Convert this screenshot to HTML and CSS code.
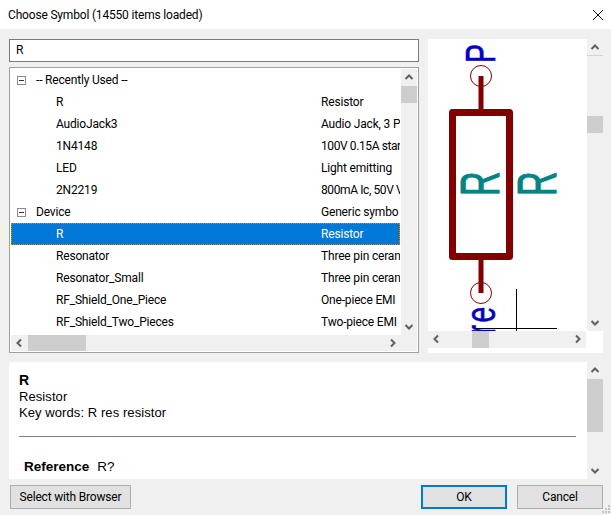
FILE: index.html
```html
<!DOCTYPE html>
<html lang="en">
<head>
  <meta charset="UTF-8" />
  <title>Choose Symbol</title>
  <link rel="stylesheet" href="styles.css">
</head>
<body>

<svg class="sprite" width="0" height="0">
  <symbol id="chev-up" viewBox="0 0 16 16"><polyline points="4.5,10 8,6.5 11.5,10" /></symbol>
  <symbol id="chev-down" viewBox="0 0 16 16"><polyline points="4.5,6 8,9.5 11.5,6" /></symbol>
  <symbol id="chev-left" viewBox="0 0 16 16"><polyline points="10,4.5 6.5,8 10,11.5" /></symbol>
  <symbol id="chev-right" viewBox="0 0 16 16"><polyline points="6,4.5 9.5,8 6,11.5" /></symbol>
</svg>

<div class="dialog">

  <div class="titlebar">
    <span class="title">Choose Symbol (14550 items loaded)</span>
    <svg class="close" width="10" height="10" viewBox="0 0 10 10"><path d="M0 0L10 10M10 0L0 10" /></svg>
  </div>

  <div class="top">
    <div class="left">
      <div class="search">R</div>

      <div class="tree">
        <div class="tree-body">
          <div class="rows">
            <div class="row group"><span class="name"><i class="expander"></i>-- Recently Used --</span><span class="desc"></span></div>
            <div class="row"><span class="name">R</span><span class="desc">Resistor</span></div>
            <div class="row"><span class="name">AudioJack3</span><span class="desc">Audio Jack, 3 P</span></div>
            <div class="row"><span class="name">1N4148</span><span class="desc tight">100V 0.15A star</span></div>
            <div class="row"><span class="name">LED</span><span class="desc">Light emitting</span></div>
            <div class="row"><span class="name">2N2219</span><span class="desc tight">800mA Ic, 50V V</span></div>
            <div class="row group"><span class="name"><i class="expander"></i>Device</span><span class="desc">Generic symbo</span></div>
            <div class="row selected"><span class="name">R</span><span class="desc">Resistor</span></div>
            <div class="row"><span class="name">Resonator</span><span class="desc">Three pin ceran</span></div>
            <div class="row"><span class="name">Resonator_Small</span><span class="desc">Three pin ceran</span></div>
            <div class="row"><span class="name">RF_Shield_One_Piece</span><span class="desc">One-piece EMI</span></div>
            <div class="row"><span class="name">RF_Shield_Two_Pieces</span><span class="desc">Two-piece EMI</span></div>
          </div>
          <div class="vbar">
            <svg class="arrow"><use href="#chev-up" /></svg>
            <div class="thumb tree-thumb"></div>
            <svg class="arrow end"><use href="#chev-down" /></svg>
          </div>
        </div>
        <div class="hbar-row">
          <div class="hbar tree-hbar">
            <svg class="arrow"><use href="#chev-left" /></svg>
            <div class="thumb tree-hthumb"></div>
            <svg class="arrow end"><use href="#chev-right" /></svg>
          </div>
          <div class="corner"></div>
        </div>
      </div>
    </div>

    <div class="preview">
      <div class="preview-top">
        <svg class="canvas" width="159" height="292" viewBox="428 39 159 292">
          <g class="part">
            <line x1="481" y1="76" x2="481" y2="110" />
            <line x1="481" y1="260" x2="481" y2="293" />
            <rect x="452.500" y="112.500" width="57" height="144" />
          </g>
          <circle class="pin" cx="481" cy="76" r="10.500" />
          <circle class="pin" cx="481" cy="293" r="10.500" />
          <text class="ref" transform="translate(495,63) rotate(-90) scale(0.66,1)">P</text>
          <text class="ref end-text" transform="translate(495,304) rotate(-90) scale(0.66,1)">re</text>
          <text class="val" transform="translate(499,196) rotate(-90) scale(0.62,1)">R</text>
          <text class="val" transform="translate(556,196) rotate(-90) scale(0.62,1)">R</text>
          <path class="cross" d="M516.500 289V331M475 328.500H557" />
        </svg>
        <div class="vbar">
          <svg class="arrow top-arrow"><use href="#chev-up" /></svg>
          <div class="thumb canvas-thumb"></div>
          <svg class="arrow end"><use href="#chev-down" /></svg>
        </div>
      </div>
      <div class="hbar canvas-hbar">
        <svg class="arrow"><use href="#chev-left" /></svg>
        <div class="thumb canvas-hthumb"></div>
        <svg class="arrow end"><use href="#chev-right" /></svg>
      </div>
    </div>
  </div>

  <div class="details">
    <div class="details-text">
      <div class="sym-name">R</div>
      <div>Resistor</div>
      <div>Key words: R res resistor</div>
      <hr />
      <div class="field"><b>Reference</b><span>R?</span></div>
    </div>
    <div class="vbar">
      <svg class="arrow"><use href="#chev-up" /></svg>
      <div class="thumb details-thumb"></div>
      <svg class="arrow end"><use href="#chev-down" /></svg>
    </div>
  </div>

  <div class="footer">
    <button class="btn browser">Select with Browser</button>
    <div class="footer-right">
      <button class="btn default">OK</button>
      <button class="btn">Cancel</button>
    </div>
  </div>

  <!-- resize grip -->
  <svg class="grip" width="9" height="9" viewBox="0 0 9 9">
    <rect x="6" y="0" width="2" height="2" />
    <rect x="3" y="3" width="2" height="2" />
    <rect x="6" y="3" width="2" height="2" />
    <rect x="0" y="6" width="2" height="2" />
    <rect x="3" y="6" width="2" height="2" />
    <rect x="6" y="6" width="2" height="2" />
  </svg>

</div>

</body>
</html>
```

FILE: styles.css
```css
body {
  margin: 0;
  background: #f0f0f0;
  color: #000;
  font-family: Roboto, "Liberation Sans", sans-serif;
  font-size: 12px;
  letter-spacing: -0.18px;
  overflow: hidden;
}
.sprite {
  position: absolute;
}
symbol polyline {
  fill: none;
  stroke: #606060;
  stroke-width: 2;
}
.dialog {
  width: 611px;
  height: 515px;
  display: flex;
  flex-direction: column;
  position: relative;
}
.titlebar {
  height: 29px;
  background: #fff;
  display: flex;
  align-items: center;
  justify-content: space-between;
  padding: 0 8px;
  box-sizing: border-box;
}
.close path {
  stroke: #111;
  stroke-width: 1;
  fill: none;
}
.top {
  display: flex;
  gap: 9px;
  margin: 10px 0 0 9px;
  height: 314px;
}
.left {
  width: 410px;
  display: flex;
  flex-direction: column;
  gap: 5px;
}
.search {
  height: 23px;
  line-height: 21px;
  box-sizing: border-box;
  background: #fff;
  border: 1px solid #7a7a7a;
  padding-left: 6px;
}
.tree {
  height: 286px;
  box-sizing: border-box;
  background: #fff;
  border: 1px solid #a0a0a0;
  padding: 1px;
}
.tree-body {
  display: flex;
  height: 266px;
}
.rows {
  width: 389px;
  margin-right: 1px;
  overflow: hidden;
}
.row {
  height: 22px;
  line-height: 22px;
  display: grid;
  grid-template-columns: 310px 79px;
  white-space: nowrap;
}
.row .name {
  padding-left: 45px;
}
.row .desc {
  overflow: hidden;
}
.row .desc.tight {
  letter-spacing: -0.4px;
}
.row.group .name {
  padding-left: 25px;
  position: relative;
}
.row.selected {
  background: #0078d7;
  color: #fff;
  outline: 1px dotted #c98a3a;
  outline-offset: -1px;
}
.expander {
  position: absolute;
  left: 6px;
  top: 7px;
  width: 9px;
  height: 9px;
  box-sizing: border-box;
  border: 1px solid #8a8a8a;
}
.expander::after {
  content: "";
  position: absolute;
  left: 1px;
  top: 3px;
  width: 5px;
  height: 1px;
  background: #333;
}

/* scrollbars */
.vbar {
  width: 16px;
  flex: none;
  background: #f0f0f0;
  display: flex;
  flex-direction: column;
}
.hbar {
  height: 16px;
  background: #f0f0f0;
  display: flex;
}
.arrow {
  width: 16px;
  height: 16px;
  flex: none;
}
.arrow.end {
  margin-top: auto;
  margin-left: auto;
}
.hbar .arrow.end {
  margin-top: 0;
}
.vbar .arrow.end {
  margin-left: 0;
}
.top-arrow {
  border-bottom: 1px solid #d4d4d4;
}
.thumb {
  background: #cdcdcd;
  flex: none;
}
.tree-thumb {
  height: 17px;
  margin-top: 1px;
}
.hbar-row {
  display: flex;
}
.tree-hbar {
  width: 390px;
}
.tree-hthumb {
  width: 58px;
  margin-left: 1px;
}
.corner {
  width: 16px;
  height: 16px;
  background: #f0f0f0;
}
.preview {
  width: 175px;
  height: 314px;
  background: #fff;
}
.preview-top {
  display: flex;
  height: 292px;
}
.canvas {
  display: block;
  flex: none;
}
.part line {
  stroke: #840000;
  stroke-width: 5;
}
.part rect {
  fill: none;
  stroke: #840000;
  stroke-width: 7;
  stroke-linejoin: round;
}
.pin {
  fill: none;
  stroke: #840000;
  stroke-width: 1;
}
.ref {
  font-family: "Liberation Sans", sans-serif;
  font-size: 43px;
  letter-spacing: 4px;
  fill: #0000c2;
  stroke: #0000c2;
  stroke-width: 0.6;
}
.end-text {
  text-anchor: end;
}
.val {
  font-family: "Liberation Sans", sans-serif;
  font-size: 55px;
  letter-spacing: 0;
  fill: #008484;
  stroke: #008484;
  stroke-width: 1;
}
.cross {
  stroke: #000;
  stroke-width: 1;
  fill: none;
}
.canvas-thumb {
  height: 17px;
  margin-top: 60px;
}
.canvas-hbar {
  width: 158px;
  height: 17px;
}
.canvas-hthumb {
  width: 17px;
  margin-left: 28px;
}
.details {
  display: flex;
  width: 594px;
  height: 117px;
  margin: 9px 0 0 9px;
  background: #fff;
  flex: none;
}
.details-text {
  flex: 1;
  padding: 10px 11px 0 10px;
  overflow: hidden;
  font-family: "Liberation Sans", sans-serif;
  font-size: 13px;
  line-height: 16px;
  letter-spacing: 0.08px;
}
.sym-name {
  font-weight: bold;
  font-size: 14px;
  line-height: 17px;
}
.details-text hr {
  height: 1px;
  border: 0;
  background: #808080;
  margin: 15px 0 22px;
}
.field {
  padding-left: 5px;
  display: flex;
  gap: 8px;
  font-size: 13.500px;
  letter-spacing: 0;
}
.details-thumb {
  height: 53px;
  margin-top: 1px;
}
.footer {
  display: flex;
  justify-content: space-between;
  padding: 6px 8px 0 10px;
}
.footer-right {
  display: flex;
  gap: 10px;
}
.btn {
  height: 24px;
  width: 86px;
  box-sizing: border-box;
  background: #e1e1e1;
  border: 1px solid #adadad;
  font-family: inherit;
  font-size: 12px;
  letter-spacing: inherit;
  color: #000;
  padding: 0;
}
.btn.browser {
  width: 121px;
}
.btn.default {
  border: 2px solid #0078d7;
}
.grip {
  position: absolute;
  right: 0;
  bottom: 1px;
}
.grip rect {
  fill: #c4c4c4;
}
```
